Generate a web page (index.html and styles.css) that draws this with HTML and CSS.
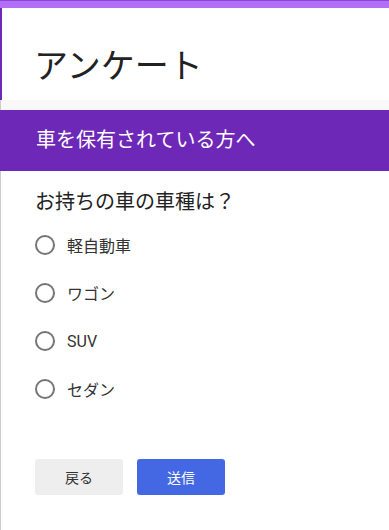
FILE: index.html
```html
<!DOCTYPE html>
<html lang="ja">
<head>
    <meta charset="UTF-8">
    <meta name="viewport" content="width=device-width, initial-scale=1.0">
    <title>アンケート</title>
    <link rel="stylesheet" href="styles.css">
</head>
<body>
    <div class="top-bar"></div>
    <div class="page">
        <header class="form-header">
            <h1>アンケート</h1>
        </header>
        <div class="gap"></div>
        <div class="section-title">車を保有されている方へ</div>
        <form class="question">
            <p class="question-text">お持ちの車の車種は？</p>
            <label class="option"><input type="radio" name="car" value="kei"><span>軽自動車</span></label>
            <label class="option"><input type="radio" name="car" value="wagon"><span>ワゴン</span></label>
            <label class="option"><input type="radio" name="car" value="suv"><span>SUV</span></label>
            <label class="option"><input type="radio" name="car" value="sedan"><span>セダン</span></label>
            <div class="buttons">
                <button type="button" class="btn back">戻る</button>
                <button type="button" class="btn submit">送信</button>
            </div>
        </form>
    </div>
</body>
</html>
```

FILE: styles.css
```css
body {
    font-family: Roboto, "Noto Sans CJK JP", sans-serif;
    background-color: white;
    margin: 0;
    padding: 0;
    color: #222;
}
.top-bar {
    height: 7px;
    background-color: #b26ef4;
    border-top: 1px solid #8a45d6;
}
.page {
    border-left: 1px solid #ccc;
    min-height: 522px;
}
.form-header {
    margin-left: -1px;
    border-left: 2px solid #6e28b8;
    padding: 33px 35px 11px 32px;
    height: 48px;
}
.form-header h1 {
    margin: 0;
    font-size: 34px;
    font-weight: normal;
    line-height: 50px;
    color: #222;
}
.gap {
    height: 10px;
    background-color: #f8f8f8;
}
.section-title {
    margin-left: -1px;
    background-color: #6e28b8;
    color: white;
    font-size: 20px;
    line-height: 61px;
    padding: 0 35px 0 36px;
}
.question {
    padding: 0 34px;
}
.question-text {
    margin: 16px 0 4px;
    font-size: 20px;
    line-height: 30px;
    color: #222;
}
.option {
    display: flex;
    align-items: center;
    height: 48px;
    font-size: 16px;
    color: #333;
}
.option input {
    appearance: none;
    width: 20px;
    height: 20px;
    margin: 0 12px 0 0;
    border: 2px solid #757575;
    border-radius: 50%;
    box-sizing: border-box;
}
.option input:checked {
    background: radial-gradient(#6e28b8 45%, transparent 50%);
    border-color: #6e28b8;
}
.buttons {
    display: flex;
    gap: 14px;
    margin-top: 46px;
}
.btn {
    width: 88px;
    height: 36px;
    border: none;
    border-radius: 3px;
    font-family: Roboto, "Noto Sans CJK JP", sans-serif;
    font-size: 14px;
    cursor: pointer;
}
.back {
    background-color: #eeeeee;
    color: #333;
}
.submit {
    background-color: #4468e4;
    color: white;
}
```
